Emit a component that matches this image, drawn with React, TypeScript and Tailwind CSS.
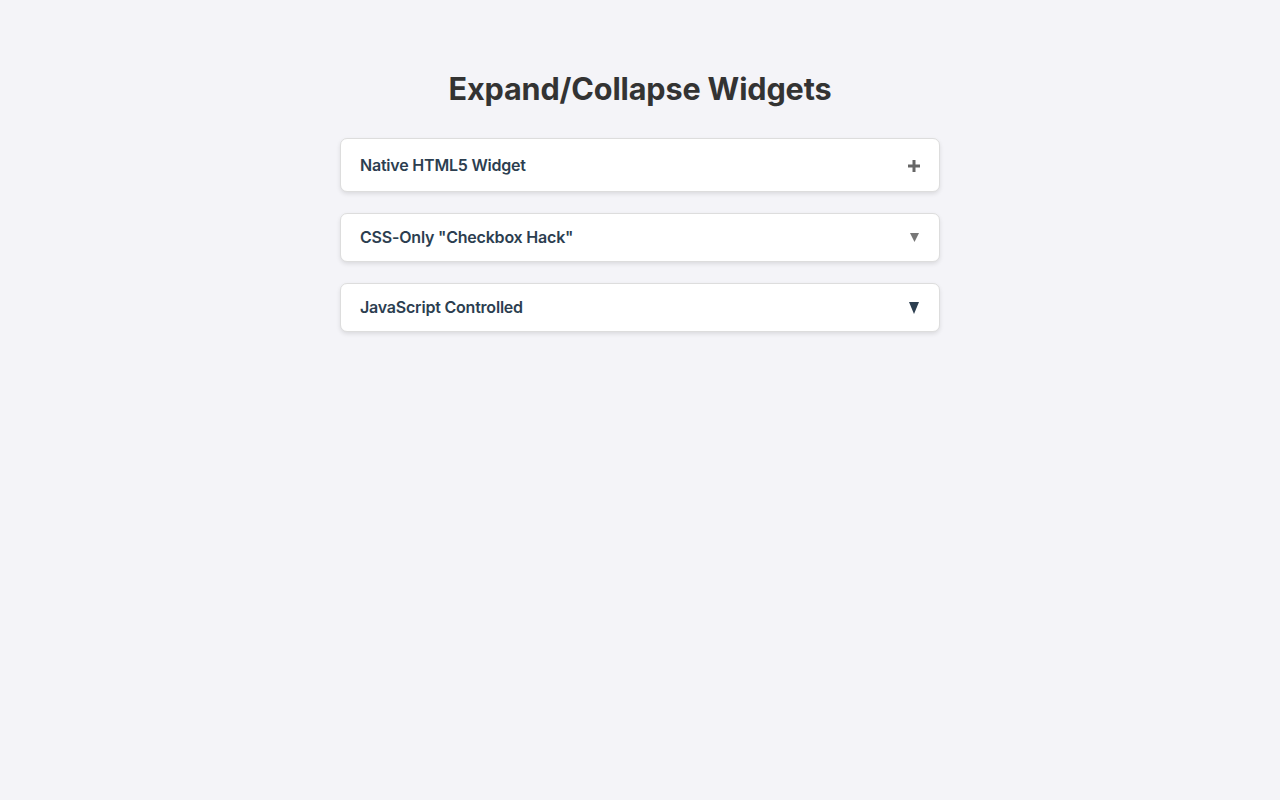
export default function App() {
  return (
    <div className="min-h-[800px] bg-[#f4f4f8] pt-[70px]" style={{ fontFamily: "Inter, 'Noto Sans', sans-serif" }}>
      <div className="mx-auto w-[600px]">
        <h1 className="text-center text-[30.6px] leading-[38px] font-bold tracking-[-0.005em] text-[#333333] mb-[30px]">Expand/Collapse Widgets</h1>
        <div className="flex flex-col gap-[21px]">
          <div className="h-[54px] flex items-center justify-between pl-[19px] pr-5 bg-white border border-[#dddddd] rounded-[7px] shadow-[0_2px_4px_rgba(0,0,0,0.1)]">
            <span className="text-[16px] font-semibold tracking-[-0.013em] text-[#2c3e50]">Native HTML5 Widget</span>
            <svg width="12" height="12" viewBox="0 0 12 12" className="mr-[-1px] mt-[1px]">
              <rect x="4.5" y="0" width="3" height="12" fill="#666666" />
              <rect x="0" y="4.5" width="12" height="3" fill="#666666" />
            </svg>
          </div>
          <div className="h-[49px] flex items-center justify-between pl-[19px] pr-5 pb-[2px] bg-white border border-[#dddddd] rounded-[7px] shadow-[0_2px_4px_rgba(0,0,0,0.1)]">
            <span className="text-[16px] font-semibold tracking-[-0.013em] text-[#2c3e50]">CSS-Only "Checkbox Hack"</span>
            <svg width="9" height="9" viewBox="0 0 9 9" className="mt-[2px]"><polygon points="0,0 9,0 4.5,9" fill="#777777" /></svg>
          </div>
          <div className="h-[49px] flex items-center justify-between pl-[19px] pr-5 pb-[2px] bg-white border border-[#dddddd] rounded-[7px] shadow-[0_2px_4px_rgba(0,0,0,0.1)]">
            <span className="text-[16px] font-semibold tracking-[-0.013em] text-[#2c3e50]">JavaScript Controlled</span>
            <svg width="10" height="12" viewBox="0 0 10 12" className="mt-[2px]"><polygon points="0,0 10,0 5,12" fill="#2c3e50" /></svg>
          </div>
        </div>
      </div>
    </div>
  );
}
